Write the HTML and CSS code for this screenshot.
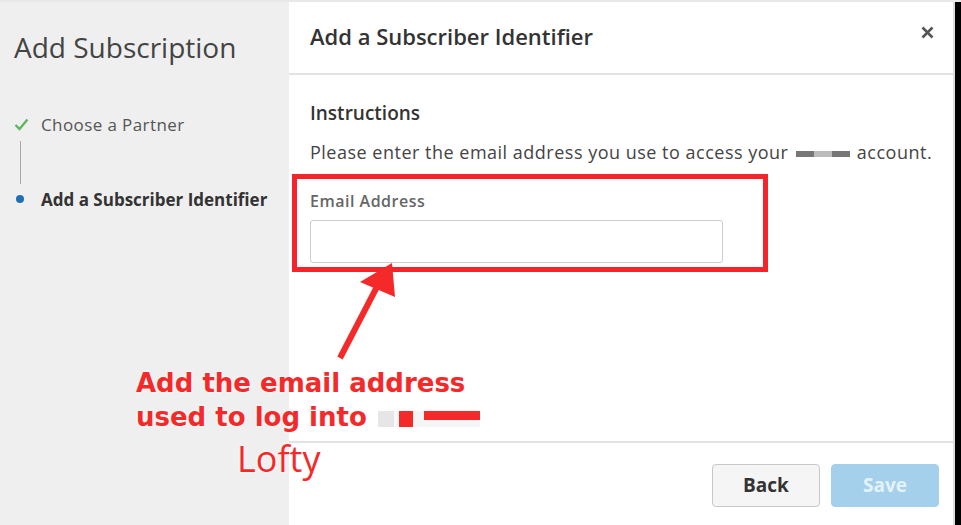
FILE: index.html
```html
<!DOCTYPE html>
<html lang="en">
<head>
    <meta charset="UTF-8">
    <title>Add Subscription</title>
    <link rel="stylesheet" href="styles.css">
</head>
<body>
    <div class="modal">
        <aside class="sidebar">
            <h1>Add Subscription</h1>
            <ul class="steps">
                <li class="step done">
                    <span class="marker">
                        <svg width="15" height="13" viewBox="0 0 15 13"><path d="M1.5 7 L5.5 11 L13.5 1.5" fill="none" stroke="#5cb85c" stroke-width="2.4"/></svg>
                    </span>
                    Choose a Partner
                </li>
                <li class="step current">
                    <span class="marker"><span class="dot"></span></span>
                    Add a Subscriber Identifier
                </li>
            </ul>
        </aside>

        <section class="panel">
            <header class="panel-header">
                <h2>Add a Subscriber Identifier</h2>
                <button class="close" aria-label="Close">
                    <svg width="13" height="13" viewBox="0 0 13 13"><path d="M1.5 1.5 L11.5 11.5 M11.5 1.5 L1.5 11.5" stroke="#555" stroke-width="2.6"/></svg>
                </button>
            </header>
            <div class="panel-body">
                <h3>Instructions</h3>
                <p>Please enter the email address you use to access your <span class="blur"><i></i><i class="light"></i><i></i></span> account.</p>
                <div class="highlight">
                    <label for="email">Email Address</label>
                    <input type="email" id="email">
                </div>
            </div>
            <footer class="panel-footer">
                <button class="btn btn-back">Back</button>
                <button class="btn btn-save">Save</button>
            </footer>
        </section>
        <div class="edge"></div>

        <svg class="arrow" width="120" height="120" viewBox="0 0 120 120">
            <line x1="20" y1="107" x2="60" y2="30" stroke="#f42a2a" stroke-width="6"/>
            <polygon points="72,12 40,31 75,46" fill="#f42a2a"/>
        </svg>
        <div class="note">
            <div class="note-bold">Add the email address</div>
            <div class="note-bold">used to log into <span class="smudge"><i class="a"></i><i class="b"></i><i class="c"></i></span></div>
            <div class="note-plain">Lofty</div>
        </div>
    </div>
</body>
</html>
```

FILE: styles.css
```css
:root {
    --text-color: #333;
    --muted: #555;
    --border-color: #e3e3e3;
    --annot-red: #f42a2a;
}

body {
    margin: 0;
    background: #000;
    font-family: "Open Sans", Lato, sans-serif;
    color: var(--text-color);
}

.modal {
    position: relative;
    display: flex;
    height: 525px;
    width: 961px;
    border-top: 2px solid #e8e8e8;
    box-sizing: border-box;
    overflow: hidden;
}

.sidebar {
    width: 289px;
    flex-shrink: 0;
    background: #efefef;
    padding: 0 0 0 14px;
    box-sizing: border-box;
}

.sidebar h1 {
    margin: 26px 0 0;
    font-size: 28px;
    font-weight: 400;
    line-height: 38px;
    color: #444;
}

.steps {
    list-style: none;
    margin: 47px 0 0;
    padding: 0;
}

.step {
    display: flex;
    align-items: center;
    font-size: 17px;
    color: var(--muted);
    height: 22px;
    letter-spacing: 0.4px;
    white-space: nowrap;
}

.step.done {
    padding-bottom: 53px;
    position: relative;
}

.step.done::after {
    content: "";
    position: absolute;
    left: 6px;
    top: 28px;
    height: 43px;
    border-left: 1px solid #aaa;
}

.step.current {
    font-weight: 700;
    color: var(--text-color);
    letter-spacing: 0;
}

.marker {
    width: 27px;
    display: flex;
    align-items: center;
}

.dot {
    width: 8px;
    height: 8px;
    border-radius: 50%;
    background: #1f6fb5;
    margin-left: 2px;
}

.panel {
    flex: 1;
    background: #fff;
    display: flex;
    flex-direction: column;
}

.panel-header {
    height: 71px;
    display: flex;
    align-items: center;
    justify-content: space-between;
    padding: 0 19px 0 21px;
    border-bottom: 2px solid var(--border-color);
}

.panel-header h2 {
    margin: 0 0 4px;
    font-size: 22px;
    font-weight: 600;
    line-height: 30px;
}

.close {
    border: none;
    background: none;
    padding: 0;
    cursor: pointer;
    margin-bottom: 10px;
    display: flex;
}

.panel-body {
    flex: 1;
    padding: 25px 0 0 21px;
}

.panel-body h3 {
    margin: 0;
    font-size: 19px;
    font-weight: 600;
    line-height: 26px;
}

.panel-body p {
    margin: 14px 0 0;
    font-size: 18px;
    line-height: 25px;
    color: #444;
    letter-spacing: 0.5px;
    white-space: nowrap;
}

.blur {
    display: inline-flex;
    vertical-align: middle;
    margin: 0 2px;
}

.blur i {
    width: 18px;
    height: 6px;
    background: #777;
}

.blur i.light {
    background: #bbb;
}

.highlight {
    margin: 9px 0 0 -18px;
    width: 476px;
    height: 98px;
    border: 5px solid #f4242a;
    box-sizing: border-box;
    padding: 11px 0 0 13px;
}

.highlight label {
    display: block;
    font-size: 16px;
    font-weight: 600;
    color: #666;
    letter-spacing: 0.5px;
    line-height: 22px;
}

.highlight input {
    display: block;
    margin-top: 8px;
    width: 413px;
    height: 43px;
    border: 1px solid #ccc;
    border-radius: 3px;
    box-sizing: border-box;
}

.panel-footer {
    height: 84px;
    border-top: 2px solid var(--border-color);
    display: flex;
    justify-content: flex-end;
    align-items: center;
    gap: 11px;
    padding: 2px 14px 0 0;
    box-sizing: border-box;
}

.btn {
    width: 108px;
    height: 43px;
    border-radius: 4px;
    font-family: inherit;
    font-size: 19px;
    font-weight: 700;
    cursor: pointer;
}

.btn-back {
    background: #f5f5f5;
    border: 1px solid #c8c8c8;
    color: var(--text-color);
}

.btn-save {
    background: #a4d0ec;
    border: 1px solid #a4d0ec;
    color: #e3f2fb;
}

.edge {
    width: 6px;
    border-left: 2px solid #ddd;
    background: #000;
}

.arrow {
    position: absolute;
    left: 320px;
    top: 249px;
}

.note {
    position: absolute;
    left: 136px;
    top: 364px;
    color: var(--annot-red);
    text-shadow: 0 0 3px #fff, 0 0 2px #fff;
}

.note-bold {
    font-family: "DejaVu Sans", sans-serif;
    font-size: 26px;
    font-weight: 700;
    line-height: 34px;
    white-space: nowrap;
}

.note-plain {
    font-size: 36px;
    font-weight: 400;
    margin: 7px 0 0 101px;
    line-height: 36px;
}

.smudge {
    display: inline-flex;
    vertical-align: middle;
    margin-left: 2px;
}

.smudge i {
    display: block;
    height: 16px;
}

.smudge .a {
    width: 16px;
    background: #e6e6e6;
}

.smudge .b {
    width: 30px;
    background: linear-gradient(90deg, #f8f8f8 0 15%, #f42a2a 15% 65%, #f5f5f5 65%);
}

.smudge .c {
    width: 56px;
    background: linear-gradient(180deg, #f42a2a 0 55%, #f5f5f5 55%);
}
```
